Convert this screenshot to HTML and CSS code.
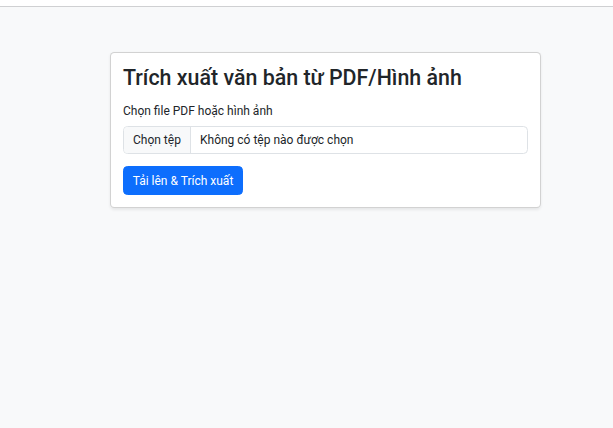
FILE: index.html
```html
<!DOCTYPE html>
<html lang="vi">
<head>
<meta charset="utf-8">
<title>Trích xuất văn bản</title>
<link rel="stylesheet" href="styles.css">
</head>
<body>
<div class="topbar"></div>
<main class="page">
  <div class="card">
    <h3 class="title">Trích xuất văn bản từ PDF/Hình ảnh</h3>
    <form class="form">
      <div class="field">
        <label class="label" for="file">Chọn file PDF hoặc hình ảnh</label>
        <div class="file-input" id="file">
          <span class="file-btn">Chọn tệp</span>
          <span class="file-name">Không có tệp nào được chọn</span>
        </div>
      </div>
      <button type="button" class="btn">Tải lên &amp; Trích xuất</button>
    </form>
  </div>
</main>
</body>
</html>
```
FILE: styles.css
```css
* { box-sizing: border-box; }
html, body { margin: 0; padding: 0; }
body {
  background: #f8f9fa;
  color: #212529;
  font-family: "Roboto", "Open Sans", "Liberation Sans", sans-serif;
  font-size: 12px;
  line-height: 1.5;
  height: 428px;
  overflow: hidden;
}
.topbar {
  height: 7px;
  background: #ffffff;
  border-bottom: 1px solid #cfd0d2;
}
.page {
  padding-top: 45px;
  padding-left: 110px;
}
.card {
  width: 431px;
  background: #fff;
  border: 1px solid rgba(0,0,0,0.175);
  border-radius: 4.5px;
  box-shadow: 0 1.5px 3px rgba(0,0,0,0.075);
  padding: 12px;
}
.title {
  margin: 0 0 11px;
  font-size: 21.4px;
  font-weight: 500;
  line-height: 1.2;
}
.field { margin-bottom: 12px; }
.label {
  display: block;
  margin-bottom: 6px;
}
.file-input {
  display: flex;
  height: 28.5px;
  border: 1px solid #dee2e6;
  border-radius: 4.5px;
  overflow: hidden;
  background: #fff;
}
.file-btn {
  display: flex;
  align-items: center;
  width: 67px;
  padding: 0 9px;
  background: #f8f9fa;
  border-right: 1px solid #dee2e6;
}
.file-name {
  display: flex;
  align-items: center;
  padding-left: 9px;
}
.btn {
  display: block;
  width: 120px;
  height: 29px;
  padding: 0;
  border: 1px solid #0d6efd;
  border-radius: 4.5px;
  background: #0d6efd;
  color: #fff;
  font-family: inherit;
  font-size: 12px;
  line-height: 1.5;
}
```
